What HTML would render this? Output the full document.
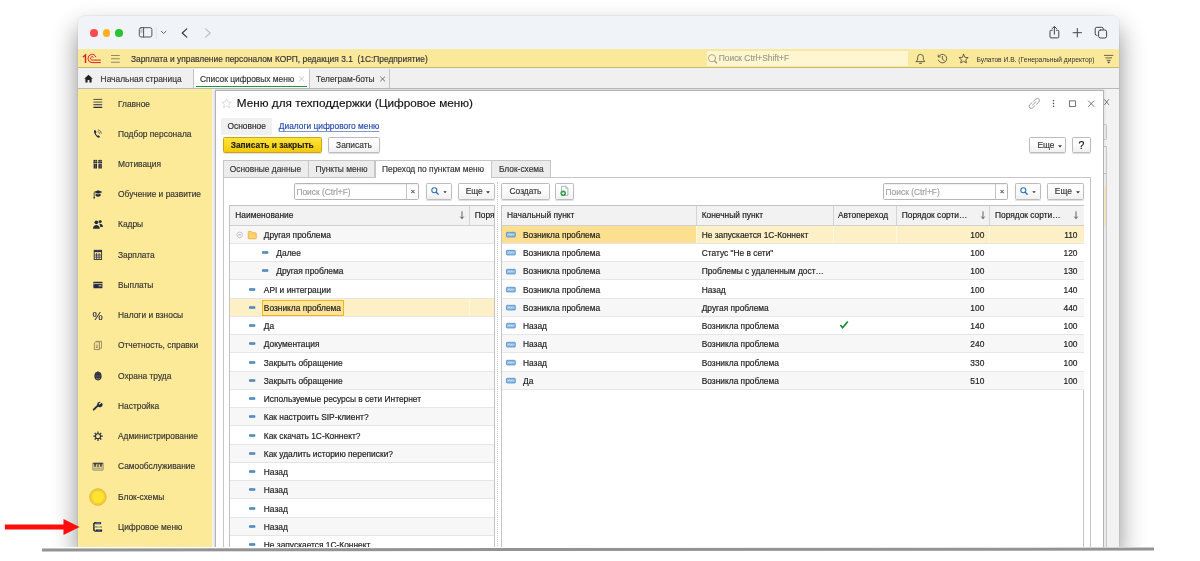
<!DOCTYPE html>
<html lang="ru">
<head>
<meta charset="utf-8">
<title>Меню для техподдержки (Цифровое меню)</title>
<style>
*{box-sizing:border-box;margin:0;padding:0}
html,body{width:1200px;height:561px;overflow:hidden;background:#fff}
body{font-family:"Liberation Sans",sans-serif;font-size:8.4px;color:#2a2a2a;position:relative;-webkit-text-stroke:.15px currentColor}
.abs{position:absolute}
#win{position:absolute;left:77.5px;top:16px;width:1041.5px;height:532px;background:#f2f2f2;border-radius:6px 6px 0 0;
 box-shadow:0 13px 26px rgba(0,0,0,.46),0 0 0 .5px rgba(0,0,0,.08);overflow:hidden}
#pg{position:absolute;left:-77.5px;top:-16px;width:1200px;height:561px;will-change:transform}
#cut{position:absolute;left:0;top:546.9px;width:1200px;height:15px;background:#fff}
#bline{position:absolute;left:42.2px;top:547.6px;width:1111.6px;height:2.6px;background:#939393;transform:rotate(-.04deg)}
#tbar{position:absolute;left:77px;top:16px;width:1043px;height:33.3px;background:#f0f3f8}
#ybar{position:absolute;left:77px;top:49.3px;width:1043px;height:19px;background:#fbe99b;border-bottom:.6px solid #c9b870}
#tabs{position:absolute;left:77px;top:68.3px;width:1043px;height:20.5px;background:#f0f0f0;border-bottom:1px solid #b9b9b9}
#side{position:absolute;left:77px;top:88.8px;width:135px;height:470px;background:#fdea98}
.si{position:absolute;left:41px;white-space:nowrap;font-size:8.4px;color:#333;line-height:10px}
.t{position:absolute;white-space:nowrap;line-height:10px}
/*FORMCSS*/
#form{position:absolute;left:214.5px;top:89.8px;width:889px;height:470px;background:#fff;border:.8px solid #b3b3b3;box-shadow:0 0 2px rgba(0,0,0,.22)}
.btn{position:absolute;height:16px;border:.7px solid #bcbcbc;border-radius:1.6px;background:linear-gradient(#fff,#fbfbfb 50%,#f0f0f0);box-shadow:0 .7px .9px rgba(0,0,0,.13);font-size:8.4px;line-height:14.6px;text-align:center;color:#333;white-space:nowrap}
.tab{position:absolute;top:160.3px;height:17.2px;background:#ececec;border:.7px solid #c6c6c6;border-bottom:none;font-size:8.4px;line-height:16.2px;text-align:center;color:#333;white-space:nowrap}
.inp{position:absolute;height:16.4px;border:.7px solid #b5b5b5;border-radius:1.6px;background:#fff;box-shadow:inset 0 .6px .8px rgba(0,0,0,.12)}
.hd{position:absolute;top:205.6px;height:20.4px;background:#f2f2f2;border-bottom:.7px solid #cfcfcf}
.row{position:absolute;height:18.25px;border-bottom:.7px solid #e6e6e6}
.c{position:absolute;white-space:nowrap;font-size:8.4px;line-height:10px;color:#222;-webkit-text-stroke:.18px #222}
.r{text-align:right}
.car{display:inline-block;vertical-align:middle;margin-left:3.6px;margin-top:1.2px}
/*ENDFORMCSS*/
</style>
</head>
<body>
<div id="win"><div id="pg">
<div id="tbar"></div>
<div class="abs" style="left:89.9px;top:28.9px;width:7.7px;height:7.7px;border-radius:50%;background:#fe4a4f"></div>
<div class="abs" style="left:102.6px;top:28.9px;width:7.7px;height:7.7px;border-radius:50%;background:#fdb024"></div>
<div class="abs" style="left:115.1px;top:28.9px;width:7.7px;height:7.7px;border-radius:50%;background:#28c232"></div>
<svg class="abs" style="left:136px;top:24px" width="80" height="18" viewBox="136 24 80 18" fill="none" stroke="#555" stroke-width="1" stroke-linecap="round" stroke-linejoin="round">
  <rect x="139.3" y="27.7" width="12.6" height="9.3" rx="1.8"/>
  <path d="M143.6 27.7V37"/>
  <path d="M140.8 30.2h1.4M140.8 32h1.4" stroke-width=".6"/>
  <path d="M156.2 27.5V38.5" stroke="#dcdfe4" stroke-width=".8"/>
  <path d="M161.3 31.3l2.3 2.2 2.3-2.2" stroke-width=".9"/>
  <path d="M186.8 28.8l-4.6 4.2 4.6 4.2" stroke="#333" stroke-width="1.1"/>
  <path d="M205.6 28.8l4.6 4.2-4.6 4.2" stroke="#b9bcc1" stroke-width="1.1"/>
</svg>
<svg class="abs" style="left:1045px;top:22px" width="70" height="20" viewBox="1045 22 70 20" fill="none" stroke="#444" stroke-width="1" stroke-linecap="round" stroke-linejoin="round">
  <path d="M1052.3 30.3h-1.3a1 1 0 0 0-1 1v5.6a1 1 0 0 0 1 1h6.8a1 1 0 0 0 1-1v-5.6a1 1 0 0 0-1-1h-1.3"/>
  <path d="M1054.4 34.2V26.6M1052.2 28.6l2.2-2.2 2.2 2.2"/>
  <path d="M1073.1 32.7h8.4M1077.3 28.5v8.4"/>
  <rect x="1098.6" y="30" width="8" height="8" rx="1.8" fill="#f0f3f8"/>
  <path d="M1097 35.4h-.2a1.6 1.6 0 0 1-1.6-1.6v-4.9a1.6 1.6 0 0 1 1.6-1.6h4.9a1.6 1.6 0 0 1 1.6 1.6v.3"/>
</svg>
<div id="ybar"></div>
<svg class="abs" style="left:80px;top:51px" width="44" height="15" viewBox="80 51 44 15" fill="none">
  <g stroke="#d8252d" stroke-width="1" stroke-linecap="butt">
    <path d="M82.9 57l2.6-1.9V63" stroke-width="1.5"/>
    <path d="M100.8 62.6H92a4.1 4.1 0 1 1 3.9-5.5" />
    <path d="M100.8 60.1H92.2a1.7 1.7 0 1 1 1.5-2.5"/>
  </g>
  <path d="M111 55.5h8.8M111 58.8h8.8M111 62.2h8.8" stroke="#8f8b62" stroke-width="1.1"/>
</svg>
<div class="t" style="left:131px;top:53.8px;font-size:8.4px;color:#333;white-space:pre">Зарплата и управление персоналом КОРП, редакция 3.1  (1С:Предприятие)</div>
<div class="abs" style="left:706.5px;top:51.3px;width:201px;height:14.6px;background:#fef6d0;border-radius:1px"></div>
<svg class="abs" style="left:707px;top:52px" width="12" height="14" viewBox="707 52 12 14" fill="none" stroke="#9b9778" stroke-width=".8" stroke-linecap="round">
  <circle cx="712" cy="58.2" r="3.6"/><path d="M714.7 61l2 2" stroke-width="1.1"/>
</svg>
<div class="t" style="left:718.8px;top:53px;font-size:8.4px;color:#9c9a86">Поиск Ctrl+Shift+F</div>
<svg class="abs" style="left:912px;top:51px" width="60" height="16" viewBox="912 51 60 16" fill="none" stroke="#4a4a3a" stroke-width=".85" stroke-linecap="round" stroke-linejoin="round">
  <path d="M916.2 61.6h8.6l-1.4-1.9v-2.4a2.9 2.9 0 0 0-5.8 0v2.4z"/>
  <path d="M919.6 63.2h1.8" stroke-width="1.1"/>
  <path d="M938.6 56.6a4.3 4.3 0 1 1-.2 3.6"/>
  <path d="M938.2 55v2h2" stroke-width=".8"/>
  <path d="M942.4 56.4v2.9l1.9 1.4"/>
  <path d="M963.6 54.3l1.35 3 3.25.3-2.45 2.15.75 3.2-2.9-1.7-2.9 1.7.75-3.2-2.45-2.15 3.25-.3z"/>
</svg>
<div class="t" style="left:976.5px;top:54.6px;font-size:6.7px;color:#333;line-height:9px;-webkit-text-stroke:0">Булатов И.В. (Генеральный директор)</div>
<svg class="abs" style="left:1102px;top:53px" width="14" height="12" viewBox="1102 53 14 12" fill="none" stroke="#5a5740" stroke-width=".9">
  <path d="M1104 55.4h9.3M1105.3 57.9h6.7M1106.6 60.3h4.1"/>
  <path d="M1107.2 61.8l1.5 1.7 1.5-1.700z" fill="#333" stroke="none"/>
</svg>
<div id="tabs"></div>
<svg class="abs" style="left:83px;top:73px" width="12" height="12" viewBox="83 73 12 12"><path d="M88.5 74.8l-4.3 3.9h1.2v3.9h2.2v-2.6h1.8v2.6h2.2v-3.9h1.2z" fill="#222"/></svg>
<div class="t" style="left:100.6px;top:73.8px;font-size:8.4px;color:#333">Начальная страница</div>
<div class="abs" style="left:193px;top:68.8px;width:117px;height:19.4px;background:#fff;border-left:.7px solid #c4c4c4;border-right:.7px solid #c4c4c4"></div>
<div class="abs" style="left:195.6px;top:86px;width:111px;height:1px;background:#1a9a39"></div>
<div class="t" style="left:200px;top:73.8px;font-size:8.4px;color:#333">Список цифровых меню</div>
<svg class="abs" style="left:298px;top:75px" width="8" height="8" viewBox="0 0 8 8"><path d="M1.2 1.6l4.8 4.800M6 1.6l-4.8 4.800" stroke="#b5b5b5" stroke-width=".8"/></svg>
<div class="t" style="left:316px;top:73.8px;font-size:8.4px;color:#333">Телеграм-боты</div>
<svg class="abs" style="left:378.6px;top:75px" width="8" height="8" viewBox="0 0 8 8"><path d="M1.2 1.6l4.8 4.800M6 1.6l-4.8 4.800" stroke="#555" stroke-width=".8"/></svg>
<div class="abs" style="left:389px;top:68.8px;width:.8px;height:19.4px;background:#c4c4c4"></div>
<div id="side"></div>
<div class="si" style="left:118px;top:98.5px">Главное</div>
<div class="si" style="left:118px;top:128.7px">Подбор персонала</div>
<div class="si" style="left:118px;top:159.0px">Мотивация</div>
<div class="si" style="left:118px;top:189.2px">Обучение и развитие</div>
<div class="si" style="left:118px;top:219.4px">Кадры</div>
<div class="si" style="left:118px;top:249.7px">Зарплата</div>
<div class="si" style="left:118px;top:279.9px">Выплаты</div>
<div class="si" style="left:118px;top:310.1px">Налоги и взносы</div>
<div class="t" style="left:92.600px;top:309.7px;font-size:11.500px;color:#272b42;line-height:12px">%</div>
<div class="si" style="left:118px;top:340.3px">Отчетность, справки</div>
<div class="si" style="left:118px;top:370.6px">Охрана труда</div>
<div class="si" style="left:118px;top:400.8px">Настройка</div>
<div class="si" style="left:118px;top:431.0px">Администрирование</div>
<div class="si" style="left:118px;top:461.3px">Самообслуживание</div>
<div class="si" style="left:118px;top:491.5px">Блок-схемы</div>
<div class="si" style="left:118px;top:521.7px">Цифровое меню</div>
<svg class="abs" style="left:85px;top:90px" width="30" height="458" viewBox="85 90 30 458" fill="none">
<g transform="translate(93 98.7)"><path d="M.4 .7h8.8M.4 3.4h8.8" stroke="#272b42" stroke-width="1" opacity=".8"/><path d="M.4 6h8.8M.4 8.7h8.8" stroke="#272b42" stroke-width="1.1"/></g>
<g transform="translate(93 128.9)"><path d="M1.6 1.2c-1 .8-.8 2.6.6 4.7s3 3.3 4.2 2.8l.7-.9-1.6-1.4-.9.5c-.6-.3-1.6-1.6-1.9-2.6l.8-.6-.7-2z" fill="#272b42"/><path d="M4.6 2.6a2.6 2.6 0 0 1 2.1 2.5M4.9 .9a4.3 4.3 0 0 1 3.6 4" stroke="#272b42" stroke-width=".8" fill="none" opacity=".75"/></g>
<g transform="translate(93 159.2)"><circle cx="1.4" cy="1.5" r=".95" fill="#272b42"/><circle cx="3.2" cy="1.5" r=".95" fill="#272b42"/><rect x="0.3" y="2.5" width="4" height="1.5" fill="#272b42"/><rect x="0.6" y="4.5" width="3.4" height="4.8" fill="#272b42"/><path d="M2.3 2.5v6.8" stroke="#fdea98" stroke-width=".5" opacity=".55"/><circle cx="6.2" cy="1.5" r=".95" fill="#272b42"/><circle cx="8.0" cy="1.5" r=".95" fill="#272b42"/><rect x="5.1" y="2.5" width="4" height="1.5" fill="#272b42"/><rect x="5.4" y="4.5" width="3.4" height="4.8" fill="#272b42"/><path d="M7.1 2.5v6.8" stroke="#fdea98" stroke-width=".5" opacity=".55"/></g>
<g transform="translate(93 189.4)"><path d="M.6 2.700L5.2 .8l4.4 1.700-4.4 1.900z" fill="#272b42"/><path d="M2.6 4.100v2.300c1.4 1.2 3.6 1.2 5 0V4.100l-2.5 1.100z" fill="#272b42"/><path d="M1.2 3v4.5" stroke="#272b42" stroke-width=".8"/><circle cx="1.2" cy="8.3" r=".9" fill="#272b42"/></g>
<g transform="translate(93 219.6)"><circle cx="3.4" cy="2.7" r="1.9" fill="#272b42"/><path d="M0 9.200c0-2.6 1.600-3.7 3.400-3.700s3.4 1.1 3.4 3.700z" fill="#272b42"/><circle cx="7.2" cy="1.9" r="1.5" fill="#272b42"/><path d="M6.2 4.200c2.200-.6 3.800.8 3.8 3.200H7.400c-.2-1.400-.6-2.400-1.200-3.200z" fill="#272b42"/></g>
<g transform="translate(93 249.9)"><rect x="1.2" y=".4" width="7.4" height="9.2" fill="none" stroke="#272b42" stroke-width=".9"/><path d="M1.2 1.400h7.4" stroke="#272b42" stroke-width="1.6"/><path d="M3.6 3v6.400M6.1 3v6.400M1.4 5.100h7M1.4 7.300h7" stroke="#272b42" stroke-width=".8"/></g>
<g transform="translate(93 280.1)"><rect x=".4" y="1.6" width="9" height="6.6" rx=".6" fill="#272b42"/><path d="M.4 3.500h9" stroke="#fdea98" stroke-width=".8"/><path d="M5.6 5.800h3" stroke="#fdea98" stroke-width=".9"/></g>
<g transform="translate(93 340.5)"><path d="M3.2 .8h5.300v6.900H3.200z" fill="none" stroke="#77745a" stroke-width=".7"/><path d="M1.3 2.600l1.400-1.300h3.800v7.800H1.300z" fill="#f3dd8c" stroke="#6e6b55" stroke-width=".7"/><path d="M3.9 4v3.500M3 6.600h1.9" stroke="#6e6b55" stroke-width=".6"/></g>
<g transform="translate(93 370.8)"><ellipse cx="5" cy="5.3" rx="3.6" ry="4.4" fill="#272b42"/><path d="M4.3 .6h1.4v1.6H4.3z" fill="#272b42"/><path d="M2.3 5.2h5.400" stroke="#fdea98" stroke-width=".5" opacity=".6"/><path d="M2.9 7c.9 1.5 3.3 1.5 4.2 0" stroke="#fdea98" stroke-width=".6" fill="none" opacity=".85"/><path d="M3.9 1.6v2M6.1 1.6v2" stroke="#fdea98" stroke-width=".4" opacity=".5"/></g>
<g transform="translate(93 401.0)"><path d="M.7 8.700l4.300-4.3" stroke="#272b42" stroke-width="1.9" stroke-linecap="round"/><path d="M8.9 1.300L7 3.2 6.1 2.3 8 .4C6.600-.1 4.800.9 4.6 2.600c-.1.900.3 1.700.9 2.300.6.6 1.4 1 2.300.9C9.5 5.6 10.4 3.7 9.9 2.300z" fill="#272b42" transform="translate(-.4 .5)"/></g>
<g transform="translate(93 431.2)"><circle cx="5" cy="5" r="2.5" fill="none" stroke="#272b42" stroke-width="1.1"/><path d="M5 .3v2M5 7.700v2M.3 5h2M7.7 5h2M1.7 1.700l1.4 1.400M6.9 6.900l1.4 1.400M1.7 8.300l1.400-1.400M6.9 3.100l1.400-1.4" stroke="#272b42" stroke-width="1.2"/></g>
<g transform="translate(93 461.5)"><rect x="-.2" y="1.3" width="10.4" height="7.4" rx=".5" fill="#dccd8e" stroke="#6f6a4e" stroke-width=".6"/><path d="M.2 1.700h9.600v1H.2z" fill="#272b42"/><path d="M1.3 2h1.600v3.300H1.300zM7.1 2h1.600v3.300H7.100z" fill="#272b42" opacity=".85"/><path d="M4.3 2.800h1.400v3H4.300z" fill="#272b42" opacity=".7"/><path d="M.6 6.900h8.8" stroke="#a69f78" stroke-width=".6"/></g>
<circle cx="97.9" cy="497.0" r="8.3" fill="#f7cd3f" stroke="#e6b32c" stroke-width=".9"/><circle cx="97.9" cy="497.0" r="6.3" fill="#fde52e" stroke="#f1c136" stroke-width=".5"/>
<g transform="translate(93 521.9)"><rect x="1.4" y="2.2" width="6.8" height="5.6" fill="#fdf4b4"/><path d="M2.7.4L.9 1.7v6.6l1.8 1.3" stroke="#1c1c1c" stroke-width="1.4" fill="none"/><rect x="2.4" y=".2" width="5.7" height="2.2" fill="#20264a"/><rect x="3.3" y=".8" width="3.8" height=".9" fill="#8f9ad0"/><rect x="2.8" y="7.6" width="6.3" height="2.2" fill="#151a3c"/><rect x="4.3" y="8.3" width="3.5" height=".8" fill="#4a5590"/><rect x="1.4" y="4.2" width="7.6" height="1.5" fill="#8c8a60"/><rect x="4" y="4.4" width="3.4" height="1.1" fill="#d8c98a"/></g>
</svg>
<!--FORMSTART-->
<div id="form"></div>
<div class="abs" style="left:1104.3px;top:88.8px;width:2.2px;height:470px;background:#e9e9e9"></div>
<div class="abs" style="left:1104.3px;top:124px;width:2.4px;height:15.5px;background:#e6e6e6;border:.6px solid #c2c2c2;border-left:none;border-radius:0 2px 2px 0"></div>
<div class="abs" style="left:1104.3px;top:146px;width:2.4px;height:28px;background:#eee;border:.6px solid #bdbdbd;border-left:none"></div>
<div class="abs" style="left:1104.3px;top:186px;width:2.2px;height:40px;background:#f3e6bd"></div>
<div class="abs" style="left:1106.3px;top:146px;width:.8px;height:420px;background:#c6c6c6"></div>
<svg class="abs" style="left:1102px;top:97px" width="10" height="10" viewBox="1102 97 10 10"><path d="M1104.3 99.3l4.6 5.6M1108.9 99.3l-4.6 5.6" stroke="#555" stroke-width=".8"/></svg>
<svg class="abs" style="left:220px;top:97px" width="14" height="13" viewBox="220 97 14 13"><path d="M226.6 98.9l1.4 3.1 3.4.3-2.6 2.2.8 3.3-3-1.8-3 1.8.8-3.3-2.6-2.2 3.4-.3z" fill="none" stroke="#cfcfcf" stroke-width=".7" stroke-linejoin="round"/></svg>
<div class="t" style="left:236.8px;top:96.3px;font-size:11.75px;line-height:14px;color:#111">Меню для техподдержки (Цифровое меню)</div>
<svg class="abs" style="left:1026px;top:96px" width="72" height="14" viewBox="1026 96 72 14" fill="none" stroke="#555" stroke-width=".8" stroke-linecap="round">
<g stroke="#8c8c8c" stroke-width=".8" transform="rotate(-43 1034.3 103.4)"><path d="M1033.2 105.5h-3.1a2.1 2.1 0 0 1 0-4.2h3.1M1035.4 101.3h3.1a2.1 2.1 0 0 1 0 4.2h-3.1M1031.9 103.4h4.8"/></g>
<g fill="#444" stroke="none"><circle cx="1053.5" cy="100.8" r=".75"/><circle cx="1053.5" cy="103.5" r=".75"/><circle cx="1053.5" cy="106.2" r=".75"/></g>
<rect x="1069.6" y="100.9" width="6" height="5.6" stroke="#555" stroke-width=".8"/>
<path d="M1088.5 100.9l5.4 5.6M1093.9 100.9l-5.4 5.6" stroke="#555" stroke-width=".8"/>
</svg>
<div class="abs" style="left:221.3px;top:118px;width:50.5px;height:17px;background:#f0f0f0;border-radius:1.5px"></div>
<div class="t" style="left:227.5px;top:121.3px">Основное</div>
<div class="t" style="left:278.8px;top:121.3px;color:#2449a8;text-decoration:underline;text-decoration-thickness:.6px;text-underline-offset:2px;text-decoration-color:#7f97d2">Диалоги цифрового меню</div>
<div class="btn" style="left:222.5px;top:137.4px;width:99.3px;font-weight:bold;color:#222;background:linear-gradient(#fee43a,#fbd71c 55%,#f3c80c);border-color:#c9a616">Записать и закрыть</div>
<div class="btn" style="left:328px;top:137.4px;width:52px">Записать</div>
<div class="btn" style="left:1029.3px;top:137.4px;width:37px;padding-left:4px">Еще<svg class="car" width="4" height="3" viewBox="0 0 4 3"><path d="M.1.3h3.8L2 2.6z" fill="#333"/></svg></div>
<div class="btn" style="left:1072px;top:137.4px;width:18.7px;font-size:10.5px;color:#111">?</div>
<div class="abs" style="left:222.5px;top:177px;width:868.3px;height:400px;border:.7px solid #c6c6c6;background:#fff"></div>
<div class="tab" style="left:222.5px;width:86px">Основные данные</div>
<div class="tab" style="left:308.2px;width:66.6px">Пункты меню</div>
<div class="tab" style="left:374.5px;width:117px;top:159.5px;height:18.5px;background:#fff;line-height:17px">Переход по пунктам меню</div>
<div class="tab" style="left:491.2px;width:60.3px">Блок-схема</div>
<div class="inp" style="left:293.7px;top:183.4px;width:125.6px"></div>
<div class="abs" style="left:406.2px;top:183.8px;width:.7px;height:15.6px;background:#c4c4c4"></div>
<div class="t" style="left:296.4px;top:187.2px;color:#a0a0a0">Поиск (Ctrl+F)</div>
<div class="t" style="left:410.5px;top:187px;color:#444;font-size:8px">×</div>
<div class="btn" style="left:425.5px;top:183.4px;width:26.2px;height:16.8px"></div>
<svg class="abs" style="left:425.5px;top:183.4px" width="26" height="16" viewBox="0 0 26 16" fill="none"><circle cx="8.3" cy="7.2" r="2.5" stroke="#2f6fb3" stroke-width="1.1"/><path d="M10.2 9.2l2 2.1" stroke="#2f6fb3" stroke-width="1.3" stroke-linecap="round"/><path d="M17.3 8.2l1.7 2 1.7-2z" fill="#333"/></svg>
<div class="btn" style="left:457.5px;top:183.4px;width:37px;height:16.8px;line-height:15.4px;padding-left:4px">Еще<svg class="car" width="4" height="3" viewBox="0 0 4 3"><path d="M.1.3h3.8L2 2.6z" fill="#333"/></svg></div>
<div class="inp" style="left:882.9px;top:183.4px;width:125.6px"></div>
<div class="abs" style="left:995.4px;top:183.8px;width:.7px;height:15.6px;background:#c4c4c4"></div>
<div class="t" style="left:885.6px;top:187.2px;color:#a0a0a0">Поиск (Ctrl+F)</div>
<div class="t" style="left:999.6999999999999px;top:187px;color:#444;font-size:8px">×</div>
<div class="btn" style="left:1014.7px;top:183.4px;width:26.2px;height:16.8px"></div>
<svg class="abs" style="left:1014.7px;top:183.4px" width="26" height="16" viewBox="0 0 26 16" fill="none"><circle cx="8.3" cy="7.2" r="2.5" stroke="#2f6fb3" stroke-width="1.1"/><path d="M10.2 9.2l2 2.1" stroke="#2f6fb3" stroke-width="1.3" stroke-linecap="round"/><path d="M17.3 8.2l1.7 2 1.7-2z" fill="#333"/></svg>
<div class="btn" style="left:1046.7px;top:183.4px;width:37px;height:16.8px;line-height:15.4px;padding-left:4px">Еще<svg class="car" width="4" height="3" viewBox="0 0 4 3"><path d="M.1.3h3.8L2 2.6z" fill="#333"/></svg></div>
<div class="abs" style="left:496.9px;top:182px;width:0;height:380px;border-left:.9px dotted #c9c9c9"></div>
<div class="btn" style="left:501.3px;top:183.4px;width:48.3px;height:16.8px;line-height:15.4px">Создать</div>
<div class="btn" style="left:555px;top:183.4px;width:18.8px;height:16.8px"></div>
<svg class="abs" style="left:555px;top:183.4px" width="19" height="16" viewBox="0 0 19 16" fill="none"><path d="M6.6 3.3h4.2l2.1 2.1v6.9H6.6z" fill="#fff" stroke="#8a97a8" stroke-width=".7"/><path d="M10.8 3.3v2.1h2.1" stroke="#8a97a8" stroke-width=".6"/><circle cx="8.2" cy="10.3" r="2.7" fill="#1f9a3f"/><path d="M8.2 8.8v3M6.7 10.3h3" stroke="#fff" stroke-width=".9"/></svg>
<div class="abs" style="left:229px;top:204.8px;width:265.5px;height:360px;border:.7px solid #c3c3c3;background:#fff"></div>
<div class="hd" style="left:230px;width:263.8px"></div>
<div class="abs" style="left:469.2px;top:205.6px;width:.7px;height:19.6px;background:#d4d4d4"></div>
<div class="c" style="left:235.3px;top:210.2px">Наименование</div>
<div class="c" style="left:474.8px;top:210.2px;width:19.2px;overflow:hidden">Поря</div>
<svg class="abs" style="left:459px;top:208.6px" width="6" height="12" viewBox="0 0 6 12" fill="none" stroke="#333" stroke-width=".75"><path d="M3 2.3v7.2M1.3 7.6l1.7 2 1.7-2"/></svg>
<div class="row" style="left:230px;top:225.65px;width:263.8px;background:#f7f7f7"></div>
<svg class="abs" style="left:236px;top:230.08px" width="22" height="10" viewBox="0 0 22 10" fill="none"><circle cx="3.7" cy="4.8" r="2.7" stroke="#a6a6a6" stroke-width=".65" fill="#fff"/><path d="M2.3 4.8h2.8" stroke="#808080" stroke-width=".7"/><path d="M12.2 2.3a.8.8 0 0 1 .8-.8h2.4l.9 1.3h3.2a.8.8 0 0 1 .8.8v4.4a.8.8 0 0 1-.8.8h-6.5a.8.8 0 0 1-.8-.8z" fill="#fbd46e" stroke="#eea52e" stroke-width=".7"/><path d="M12.6 3.9h7.4" stroke="#f6c255" stroke-width=".6"/></svg>
<div class="c" style="left:263.8px;top:229.98px">Другая проблема</div>
<div class="row" style="left:230px;top:243.9px;width:263.8px;background:#fff"></div>
<svg class="abs" style="left:260.8px;top:250.03px" width="9" height="6" viewBox="0 0 9 6"><rect x="1" y="1.15" width="6.3" height="2.7" rx=".8" fill="#3f7cb3"/><path d="M1.9 2.4h4.5" stroke="#76a9d6" stroke-width=".5"/></svg>
<div class="c" style="left:276.3px;top:248.23px">Далее</div>
<div class="row" style="left:230px;top:262.15px;width:263.8px;background:#f7f7f7"></div>
<svg class="abs" style="left:260.8px;top:268.27px" width="9" height="6" viewBox="0 0 9 6"><rect x="1" y="1.15" width="6.3" height="2.7" rx=".8" fill="#3f7cb3"/><path d="M1.9 2.4h4.5" stroke="#76a9d6" stroke-width=".5"/></svg>
<div class="c" style="left:276.3px;top:266.47px">Другая проблема</div>
<div class="row" style="left:230px;top:280.4px;width:263.8px;background:#fff"></div>
<svg class="abs" style="left:248.3px;top:286.52px" width="9" height="6" viewBox="0 0 9 6"><rect x="1" y="1.15" width="6.3" height="2.7" rx=".8" fill="#3f7cb3"/><path d="M1.9 2.4h4.5" stroke="#76a9d6" stroke-width=".5"/></svg>
<div class="c" style="left:263.8px;top:284.72px">API и интеграции</div>
<div class="row" style="left:230px;top:298.65px;width:263.8px;background:#fdf0c6"></div>
<svg class="abs" style="left:248.3px;top:304.77px" width="9" height="6" viewBox="0 0 9 6"><rect x="1" y="1.15" width="6.3" height="2.7" rx=".8" fill="#3f7cb3"/><path d="M1.9 2.4h4.5" stroke="#76a9d6" stroke-width=".5"/></svg>
<div class="abs" style="left:469.2px;top:298.65px;width:.8px;height:17.75px;background:#fff8e0"></div>
<div class="abs" style="left:261.8px;top:299.55px;width:82px;height:16.3px;background:#fde39c;border:.7px solid #f3b51d"></div>
<div class="c" style="left:263.8px;top:302.97px">Возникла проблема</div>
<div class="row" style="left:230px;top:316.9px;width:263.8px;background:#fff"></div>
<svg class="abs" style="left:248.3px;top:323.02px" width="9" height="6" viewBox="0 0 9 6"><rect x="1" y="1.15" width="6.3" height="2.7" rx=".8" fill="#3f7cb3"/><path d="M1.9 2.4h4.5" stroke="#76a9d6" stroke-width=".5"/></svg>
<div class="c" style="left:263.8px;top:321.22px">Да</div>
<div class="row" style="left:230px;top:335.15px;width:263.8px;background:#f7f7f7"></div>
<svg class="abs" style="left:248.3px;top:341.27px" width="9" height="6" viewBox="0 0 9 6"><rect x="1" y="1.15" width="6.3" height="2.7" rx=".8" fill="#3f7cb3"/><path d="M1.9 2.4h4.5" stroke="#76a9d6" stroke-width=".5"/></svg>
<div class="c" style="left:263.8px;top:339.47px">Документация</div>
<div class="row" style="left:230px;top:353.4px;width:263.8px;background:#fff"></div>
<svg class="abs" style="left:248.3px;top:359.52px" width="9" height="6" viewBox="0 0 9 6"><rect x="1" y="1.15" width="6.3" height="2.7" rx=".8" fill="#3f7cb3"/><path d="M1.9 2.4h4.5" stroke="#76a9d6" stroke-width=".5"/></svg>
<div class="c" style="left:263.8px;top:357.72px">Закрыть обращение</div>
<div class="row" style="left:230px;top:371.65px;width:263.8px;background:#f7f7f7"></div>
<svg class="abs" style="left:248.3px;top:377.77px" width="9" height="6" viewBox="0 0 9 6"><rect x="1" y="1.15" width="6.3" height="2.7" rx=".8" fill="#3f7cb3"/><path d="M1.9 2.4h4.5" stroke="#76a9d6" stroke-width=".5"/></svg>
<div class="c" style="left:263.8px;top:375.97px">Закрыть обращение</div>
<div class="row" style="left:230px;top:389.9px;width:263.8px;background:#fff"></div>
<svg class="abs" style="left:248.3px;top:396.02px" width="9" height="6" viewBox="0 0 9 6"><rect x="1" y="1.15" width="6.3" height="2.7" rx=".8" fill="#3f7cb3"/><path d="M1.9 2.4h4.5" stroke="#76a9d6" stroke-width=".5"/></svg>
<div class="c" style="left:263.8px;top:394.22px">Используемые ресурсы в сети Интернет</div>
<div class="row" style="left:230px;top:408.15px;width:263.8px;background:#f7f7f7"></div>
<svg class="abs" style="left:248.3px;top:414.27px" width="9" height="6" viewBox="0 0 9 6"><rect x="1" y="1.15" width="6.3" height="2.7" rx=".8" fill="#3f7cb3"/><path d="M1.9 2.4h4.5" stroke="#76a9d6" stroke-width=".5"/></svg>
<div class="c" style="left:263.8px;top:412.47px">Как настроить SIP-клиент?</div>
<div class="row" style="left:230px;top:426.4px;width:263.8px;background:#fff"></div>
<svg class="abs" style="left:248.3px;top:432.52px" width="9" height="6" viewBox="0 0 9 6"><rect x="1" y="1.15" width="6.3" height="2.7" rx=".8" fill="#3f7cb3"/><path d="M1.9 2.4h4.5" stroke="#76a9d6" stroke-width=".5"/></svg>
<div class="c" style="left:263.8px;top:430.72px">Как скачать 1С-Коннект?</div>
<div class="row" style="left:230px;top:444.65px;width:263.8px;background:#f7f7f7"></div>
<svg class="abs" style="left:248.3px;top:450.77px" width="9" height="6" viewBox="0 0 9 6"><rect x="1" y="1.15" width="6.3" height="2.7" rx=".8" fill="#3f7cb3"/><path d="M1.9 2.4h4.5" stroke="#76a9d6" stroke-width=".5"/></svg>
<div class="c" style="left:263.8px;top:448.97px">Как удалить историю переписки?</div>
<div class="row" style="left:230px;top:462.9px;width:263.8px;background:#fff"></div>
<svg class="abs" style="left:248.3px;top:469.02px" width="9" height="6" viewBox="0 0 9 6"><rect x="1" y="1.15" width="6.3" height="2.7" rx=".8" fill="#3f7cb3"/><path d="M1.9 2.4h4.5" stroke="#76a9d6" stroke-width=".5"/></svg>
<div class="c" style="left:263.8px;top:467.22px">Назад</div>
<div class="row" style="left:230px;top:481.15px;width:263.8px;background:#f7f7f7"></div>
<svg class="abs" style="left:248.3px;top:487.27px" width="9" height="6" viewBox="0 0 9 6"><rect x="1" y="1.15" width="6.3" height="2.7" rx=".8" fill="#3f7cb3"/><path d="M1.9 2.4h4.5" stroke="#76a9d6" stroke-width=".5"/></svg>
<div class="c" style="left:263.8px;top:485.47px">Назад</div>
<div class="row" style="left:230px;top:499.4px;width:263.8px;background:#fff"></div>
<svg class="abs" style="left:248.3px;top:505.52px" width="9" height="6" viewBox="0 0 9 6"><rect x="1" y="1.15" width="6.3" height="2.7" rx=".8" fill="#3f7cb3"/><path d="M1.9 2.4h4.5" stroke="#76a9d6" stroke-width=".5"/></svg>
<div class="c" style="left:263.8px;top:503.72px">Назад</div>
<div class="row" style="left:230px;top:517.65px;width:263.8px;background:#f7f7f7"></div>
<svg class="abs" style="left:248.3px;top:523.77px" width="9" height="6" viewBox="0 0 9 6"><rect x="1" y="1.15" width="6.3" height="2.7" rx=".8" fill="#3f7cb3"/><path d="M1.9 2.4h4.5" stroke="#76a9d6" stroke-width=".5"/></svg>
<div class="c" style="left:263.8px;top:521.97px">Назад</div>
<div class="row" style="left:230px;top:535.9px;width:263.8px;background:#fff"></div>
<svg class="abs" style="left:248.3px;top:542.02px" width="9" height="6" viewBox="0 0 9 6"><rect x="1" y="1.15" width="6.3" height="2.7" rx=".8" fill="#3f7cb3"/><path d="M1.9 2.4h4.5" stroke="#76a9d6" stroke-width=".5"/></svg>
<div class="c" style="left:263.8px;top:540.22px">Не запускается 1С-Коннект</div>
<div class="abs" style="left:500.8px;top:204.8px;width:583.4000000000001px;height:360px;border:.7px solid #c3c3c3;background:#fff"></div>
<div class="hd" style="left:502px;width:581.5000000000001px"></div>
<div class="abs" style="left:695.5px;top:205.6px;width:.7px;height:19.6px;background:#d4d4d4"></div>
<div class="abs" style="left:832.5px;top:205.6px;width:.7px;height:19.6px;background:#d4d4d4"></div>
<div class="abs" style="left:896.3px;top:205.6px;width:.7px;height:19.6px;background:#d4d4d4"></div>
<div class="abs" style="left:989.3px;top:205.6px;width:.7px;height:19.6px;background:#d4d4d4"></div>
<div class="c" style="left:507px;top:210.2px">Начальный пункт</div>
<div class="c" style="left:701.7px;top:210.2px">Конечный пункт</div>
<div class="c" style="left:838px;top:210.2px">Автопереход</div>
<div class="c" style="left:901.8px;top:210.2px">Порядок сорти…</div>
<div class="c" style="left:995px;top:210.2px">Порядок сорти…</div>
<svg class="abs" style="left:979.5px;top:208.6px" width="6" height="12" viewBox="0 0 6 12" fill="none" stroke="#333" stroke-width=".75"><path d="M3 2.3v7.2M1.3 7.6l1.7 2 1.7-2"/></svg>
<svg class="abs" style="left:1072.8px;top:208.6px" width="6" height="12" viewBox="0 0 6 12" fill="none" stroke="#333" stroke-width=".75"><path d="M3 2.3v7.2M1.3 7.6l1.7 2 1.7-2"/></svg>
<div class="row" style="left:502px;top:225.65px;width:581.5000000000001px;background:#fdf0c6"></div>
<div class="abs" style="left:502px;top:225.65px;width:193.5px;height:17.65px;background:#fde08f"></div>
<div class="abs" style="left:695.5px;top:225.65px;width:.8px;height:17.65px;background:#fff8e0"></div>
<div class="abs" style="left:832.5px;top:225.65px;width:.8px;height:17.65px;background:#fff8e0"></div>
<div class="abs" style="left:896.3px;top:225.65px;width:.8px;height:17.65px;background:#fff8e0"></div>
<div class="abs" style="left:989.3px;top:225.65px;width:.8px;height:17.65px;background:#fff8e0"></div>
<svg class="abs" style="left:506px;top:231.08px" width="10" height="8" viewBox="0 0 10 8" fill="none"><rect x=".5" y="1.3" width="8.8" height="4.7" rx=".6" fill="#8dbbe4" stroke="#4585c6" stroke-width=".7"/><path d="M1.6 4.4l1.5-1.5 1.5 1.3 1.4-1.1" stroke="#eef5fc" stroke-width=".7"/><path d="M6.3 3.7h2" stroke="#dcebf8" stroke-width=".7"/></svg>
<div class="c" style="left:523px;top:229.98px">Возникла проблема</div>
<div class="c" style="left:701.7px;top:229.98px">Не запускается 1С-Коннект</div>
<div class="c r" style="left:940px;width:44.3px;top:229.98px">100</div>
<div class="c r" style="left:1033px;width:44.5px;top:229.98px">110</div>
<div class="row" style="left:502px;top:243.9px;width:581.5000000000001px;background:#fff"></div>
<svg class="abs" style="left:506px;top:249.33px" width="10" height="8" viewBox="0 0 10 8" fill="none"><rect x=".5" y="1.3" width="8.8" height="4.7" rx=".6" fill="#8dbbe4" stroke="#4585c6" stroke-width=".7"/><path d="M1.6 4.4l1.5-1.5 1.5 1.3 1.4-1.1" stroke="#eef5fc" stroke-width=".7"/><path d="M6.3 3.7h2" stroke="#dcebf8" stroke-width=".7"/></svg>
<div class="c" style="left:523px;top:248.23px">Возникла проблема</div>
<div class="c" style="left:701.7px;top:248.23px">Статус &quot;Не в сети&quot;</div>
<div class="c r" style="left:940px;width:44.3px;top:248.23px">100</div>
<div class="c r" style="left:1033px;width:44.5px;top:248.23px">120</div>
<div class="row" style="left:502px;top:262.15px;width:581.5000000000001px;background:#f7f7f7"></div>
<svg class="abs" style="left:506px;top:267.57px" width="10" height="8" viewBox="0 0 10 8" fill="none"><rect x=".5" y="1.3" width="8.8" height="4.7" rx=".6" fill="#8dbbe4" stroke="#4585c6" stroke-width=".7"/><path d="M1.6 4.4l1.5-1.5 1.5 1.3 1.4-1.1" stroke="#eef5fc" stroke-width=".7"/><path d="M6.3 3.7h2" stroke="#dcebf8" stroke-width=".7"/></svg>
<div class="c" style="left:523px;top:266.47px">Возникла проблема</div>
<div class="c" style="left:701.7px;top:266.47px">Проблемы с удаленным дост…</div>
<div class="c r" style="left:940px;width:44.3px;top:266.47px">100</div>
<div class="c r" style="left:1033px;width:44.5px;top:266.47px">130</div>
<div class="row" style="left:502px;top:280.4px;width:581.5000000000001px;background:#fff"></div>
<svg class="abs" style="left:506px;top:285.82px" width="10" height="8" viewBox="0 0 10 8" fill="none"><rect x=".5" y="1.3" width="8.8" height="4.7" rx=".6" fill="#8dbbe4" stroke="#4585c6" stroke-width=".7"/><path d="M1.6 4.4l1.5-1.5 1.5 1.3 1.4-1.1" stroke="#eef5fc" stroke-width=".7"/><path d="M6.3 3.7h2" stroke="#dcebf8" stroke-width=".7"/></svg>
<div class="c" style="left:523px;top:284.72px">Возникла проблема</div>
<div class="c" style="left:701.7px;top:284.72px">Назад</div>
<div class="c r" style="left:940px;width:44.3px;top:284.72px">100</div>
<div class="c r" style="left:1033px;width:44.5px;top:284.72px">140</div>
<div class="row" style="left:502px;top:298.65px;width:581.5000000000001px;background:#f7f7f7"></div>
<svg class="abs" style="left:506px;top:304.07px" width="10" height="8" viewBox="0 0 10 8" fill="none"><rect x=".5" y="1.3" width="8.8" height="4.7" rx=".6" fill="#8dbbe4" stroke="#4585c6" stroke-width=".7"/><path d="M1.6 4.4l1.5-1.5 1.5 1.3 1.4-1.1" stroke="#eef5fc" stroke-width=".7"/><path d="M6.3 3.7h2" stroke="#dcebf8" stroke-width=".7"/></svg>
<div class="c" style="left:523px;top:302.97px">Возникла проблема</div>
<div class="c" style="left:701.7px;top:302.97px">Другая проблема</div>
<div class="c r" style="left:940px;width:44.3px;top:302.97px">100</div>
<div class="c r" style="left:1033px;width:44.5px;top:302.97px">440</div>
<div class="row" style="left:502px;top:316.9px;width:581.5000000000001px;background:#fff"></div>
<svg class="abs" style="left:506px;top:322.32px" width="10" height="8" viewBox="0 0 10 8" fill="none"><rect x=".5" y="1.3" width="8.8" height="4.7" rx=".6" fill="#8dbbe4" stroke="#4585c6" stroke-width=".7"/><path d="M1.6 4.4l1.5-1.5 1.5 1.3 1.4-1.1" stroke="#eef5fc" stroke-width=".7"/><path d="M6.3 3.7h2" stroke="#dcebf8" stroke-width=".7"/></svg>
<div class="c" style="left:523px;top:321.22px">Назад</div>
<div class="c" style="left:701.7px;top:321.22px">Возникла проблема</div>
<svg class="abs" style="left:838px;top:320.32px" width="13" height="11" viewBox="0 0 13 11" fill="none"><path d="M2.4 5.1l2.2 2.7 5.2-6.3" stroke="#0f8b2a" stroke-width="1.6" stroke-linejoin="miter"/></svg>
<div class="c r" style="left:940px;width:44.3px;top:321.22px">140</div>
<div class="c r" style="left:1033px;width:44.5px;top:321.22px">100</div>
<div class="row" style="left:502px;top:335.15px;width:581.5000000000001px;background:#f7f7f7"></div>
<svg class="abs" style="left:506px;top:340.57px" width="10" height="8" viewBox="0 0 10 8" fill="none"><rect x=".5" y="1.3" width="8.8" height="4.7" rx=".6" fill="#8dbbe4" stroke="#4585c6" stroke-width=".7"/><path d="M1.6 4.4l1.5-1.5 1.5 1.3 1.4-1.1" stroke="#eef5fc" stroke-width=".7"/><path d="M6.3 3.7h2" stroke="#dcebf8" stroke-width=".7"/></svg>
<div class="c" style="left:523px;top:339.47px">Назад</div>
<div class="c" style="left:701.7px;top:339.47px">Возникла проблема</div>
<div class="c r" style="left:940px;width:44.3px;top:339.47px">240</div>
<div class="c r" style="left:1033px;width:44.5px;top:339.47px">100</div>
<div class="row" style="left:502px;top:353.4px;width:581.5000000000001px;background:#fff"></div>
<svg class="abs" style="left:506px;top:358.82px" width="10" height="8" viewBox="0 0 10 8" fill="none"><rect x=".5" y="1.3" width="8.8" height="4.7" rx=".6" fill="#8dbbe4" stroke="#4585c6" stroke-width=".7"/><path d="M1.6 4.4l1.5-1.5 1.5 1.3 1.4-1.1" stroke="#eef5fc" stroke-width=".7"/><path d="M6.3 3.7h2" stroke="#dcebf8" stroke-width=".7"/></svg>
<div class="c" style="left:523px;top:357.72px">Назад</div>
<div class="c" style="left:701.7px;top:357.72px">Возникла проблема</div>
<div class="c r" style="left:940px;width:44.3px;top:357.72px">330</div>
<div class="c r" style="left:1033px;width:44.5px;top:357.72px">100</div>
<div class="row" style="left:502px;top:371.65px;width:581.5000000000001px;background:#f7f7f7"></div>
<svg class="abs" style="left:506px;top:377.07px" width="10" height="8" viewBox="0 0 10 8" fill="none"><rect x=".5" y="1.3" width="8.8" height="4.7" rx=".6" fill="#8dbbe4" stroke="#4585c6" stroke-width=".7"/><path d="M1.6 4.4l1.5-1.5 1.5 1.3 1.4-1.1" stroke="#eef5fc" stroke-width=".7"/><path d="M6.3 3.7h2" stroke="#dcebf8" stroke-width=".7"/></svg>
<div class="c" style="left:523px;top:375.97px">Да</div>
<div class="c" style="left:701.7px;top:375.97px">Возникла проблема</div>
<div class="c r" style="left:940px;width:44.3px;top:375.97px">510</div>
<div class="c r" style="left:1033px;width:44.5px;top:375.97px">100</div>
<!--FORMEND-->
</div></div>
<div id="cut"></div>
<div id="bline"></div>
<svg class="abs" style="left:0;top:515px" width="84" height="24" viewBox="0 515 84 24"><path d="M4.9 524.4H63.5V518.9L79.6 527 63.5 535.1V529.6H4.9z" fill="#fe0d0d"/></svg>

</body>
</html>
